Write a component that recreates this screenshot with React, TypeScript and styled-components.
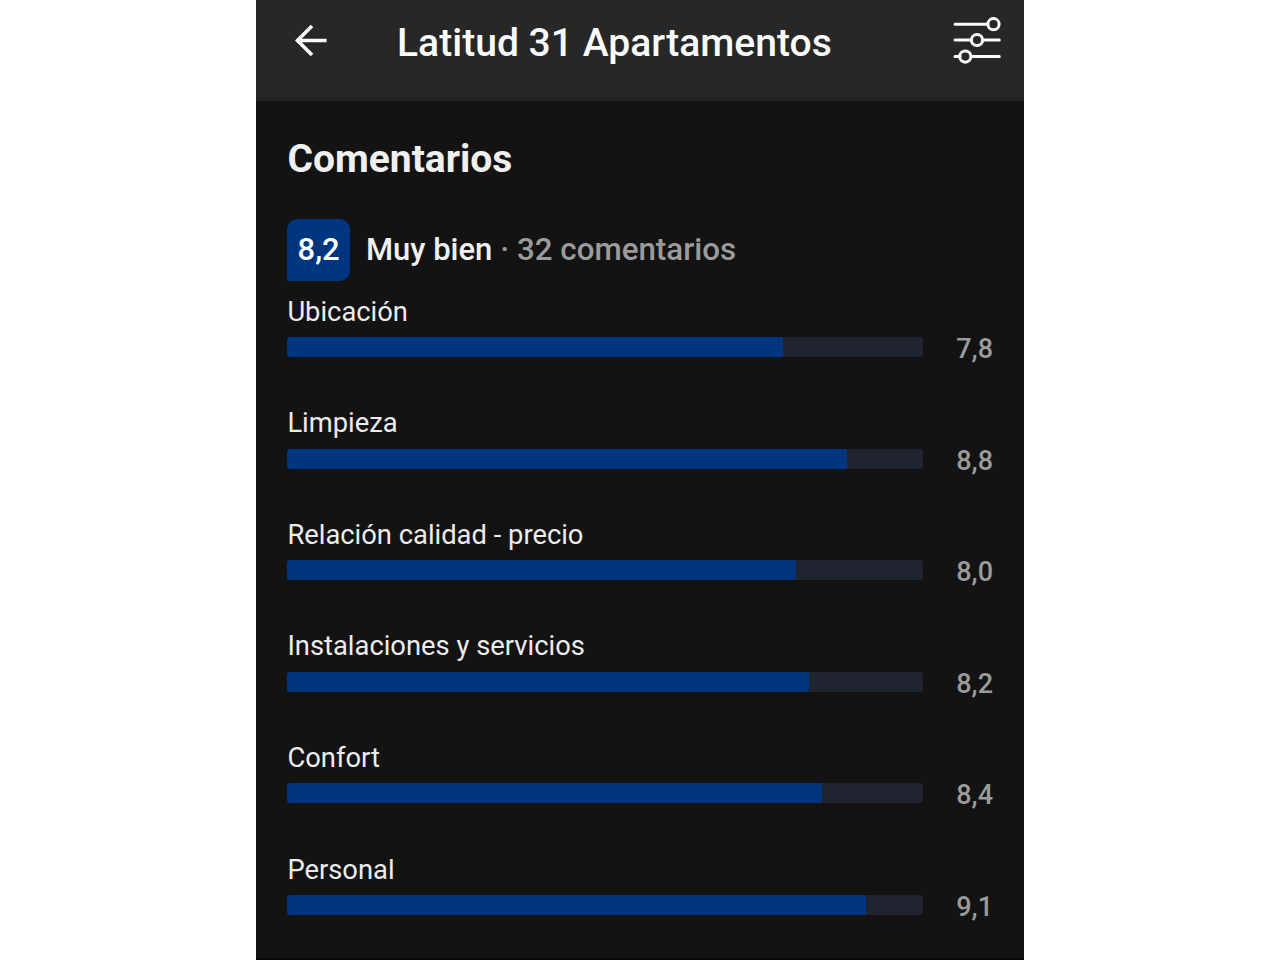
import styled, {createGlobalStyle} from "styled-components";

type CategoryScore = {
    name: string
    score: number
}

const categoryScores: CategoryScore[] = [
    {name: "Ubicación", score: 7.8},
    {name: "Limpieza", score: 8.8},
    {name: "Relación calidad - precio", score: 8.0},
    {name: "Instalaciones y servicios", score: 8.2},
    {name: "Confort", score: 8.4},
    {name: "Personal", score: 9.1},
]

function formatScore(score: number) {
    return score.toFixed(1).replace(".", ",")
}

export default function App() {

    return (
        <>
            <GlobalStyle/>
            <Screen>
                <Header>
                    <BackButton aria-label="Volver">
                        <svg width="34" height="34" viewBox="0 0 34 34" fill="none" stroke="#fafafa" strokeWidth="3.6">
                            <path d="M32.6 16.5H3M18 2L3.5 16.5L18 31"/>
                        </svg>
                    </BackButton>
                    <Title>Latitud 31 Apartamentos</Title>
                    <FilterButton aria-label="Filtros">
                        <svg width="50" height="48" viewBox="0 0 50 48" fill="none" stroke="#fafafa" strokeWidth="3"
                             strokeLinecap="round">
                            <path d="M3 8.2H35M3 24H19M31 24H47.3M3 40.6H8M20 40.6H47.3"/>
                            <circle cx="41.5" cy="8.2" r="5.6"/>
                            <circle cx="25" cy="24" r="5.6"/>
                            <circle cx="13.3" cy="40.6" r="5.6"/>
                        </svg>
                    </FilterButton>
                </Header>
                <Content>
                    <Heading>Comentarios</Heading>
                    <Summary>
                        <ScoreBadge>8,2</ScoreBadge>
                        <Verdict>Muy bien</Verdict>
                        <ReviewCount>· 32 comentarios</ReviewCount>
                    </Summary>
                    {categoryScores.map(category =>
                        <Category key={category.name}>
                            <CategoryName>{category.name}</CategoryName>
                            <ScoreRow>
                                <Track>
                                    <Bar style={{width: `${category.score * 10}%`}}/>
                                </Track>
                                <Score>{formatScore(category.score)}</Score>
                            </ScoreRow>
                        </Category>)}
                </Content>
            </Screen>
        </>
    )
}

const GlobalStyle = createGlobalStyle`
  * {
    box-sizing: border-box;
  }

  body {
    margin: 0;
    background-color: #ffffff;
    font-family: Roboto, sans-serif;
  }
`

const Screen = styled.main`
  width: 768px;
  height: 960px;
  margin: 0 auto;
  overflow: hidden;
  background-color: #131313;
  border-bottom: 2px solid #090909;
`

const Header = styled.header`
  display: flex;
  align-items: flex-start;
  height: 101px;
  padding: 0 22px 0 38px;
  background-color: #272727;
  border-bottom: 5px solid #222222;
`

const BackButton = styled.button`
  display: flex;
  margin: 24px 0 0;
  padding: 0;
  border: none;
  background: none;
`

const Title = styled.h1`
  flex: 1;
  margin: 18px 0 0 69px;
  line-height: 50px;
  font-size: 39.1px;
  font-weight: 500;
  white-space: nowrap;
  color: #fafafa;
`

const FilterButton = styled.button`
  display: flex;
  margin: 16px 0 0;
  padding: 0;
  border: none;
  background: none;
`

const Content = styled.section`
  padding: 33px 31px 0 31.4px;
`

const Heading = styled.h2`
  margin: 0;
  line-height: 50px;
  font-size: 39px;
  font-weight: 700;
  color: #f0f0f0;
`

const Summary = styled.div`
  display: flex;
  align-items: center;
  height: 62px;
  margin: 34.5px 0 15px;
  font-size: 31px;
  font-weight: 500;
`

const ScoreBadge = styled.span`
  display: flex;
  align-items: center;
  justify-content: center;
  width: 62.5px;
  height: 62px;
  border-radius: 10px 10px 10px 0;
  background-color: #003580;
  color: #ffffff;
`

const Verdict = styled.span`
  margin-left: 16px;
  color: #f0f0f0;
`

const ReviewCount = styled.span`
  margin-left: 8px;
  font-size: 31.3px;
  color: #9b9b9b;
`

const Category = styled.div`
  height: 111.65px;
`

const CategoryName = styled.p`
  margin: 0;
  line-height: 32px;
  font-size: 27.35px;
  color: #ececec;
`

const ScoreRow = styled.div`
  display: flex;
  align-items: center;
  justify-content: space-between;
  height: 20px;
  margin-top: 9.4px;
`

const Track = styled.div`
  width: 636px;
  height: 20px;
  border-radius: 3px;
  overflow: hidden;
  background-color: #20242e;
`

const Bar = styled.div`
  height: 100%;
  border-radius: 3px 2px 2px 3px;
  background-color: #003580;
`

const Score = styled.span`
  padding-top: 4px;
  font-size: 27px;
  font-weight: 500;
  color: #9b9b9b;
`
